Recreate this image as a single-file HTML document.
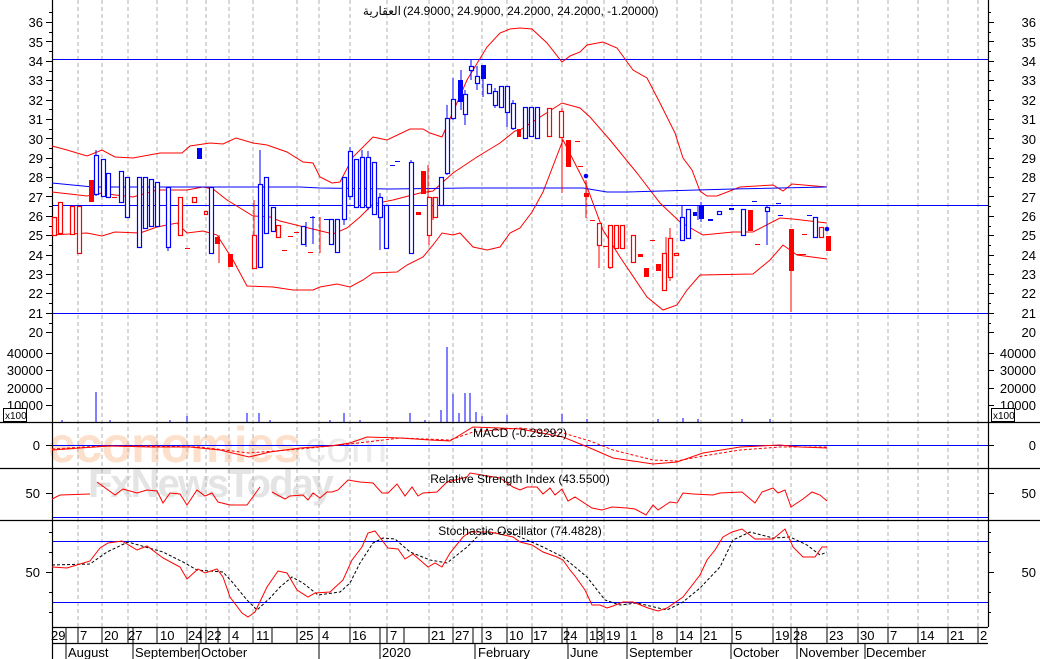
<!DOCTYPE html>
<html><head><meta charset="utf-8"><style>
html,body{margin:0;padding:0;background:#fff;width:1040px;height:659px;overflow:hidden}
svg{display:block;font-family:"Liberation Sans","Noto Sans CJK SC",sans-serif}
</style></head><body>
<svg width="1040" height="659" viewBox="0 0 1040 659" xmlns="http://www.w3.org/2000/svg">
<rect width="1040" height="659" fill="#fff"/>
<!-- watermark -->
<text x="48" y="462" font-size="50" fill="#fde0cc" font-weight="bold" letter-spacing="-1">economies</text>
<text x="292" y="462" font-size="44" fill="#ebebeb">.com</text>
<text x="88" y="497" font-size="40" fill="#e4e4e4" font-weight="bold" letter-spacing="-2">FxNewsToday</text>
<!-- vertical grid -->
<g stroke="#b0b0b0" stroke-dasharray="4,3" stroke-width="1">
<path d="M78 0V627M102 0V627M128 0V627M157 0V627M187 0V627M206 0V627M229 0V627M253 0V627M297 0V627M319 0V627M350 0V627M387 0V627M429 0V627M453 0V627M482 0V627M507 0V627M532 0V627M562 0V627M587 0V627M604 0V627M627 0V627M653 0V627M677 0V627M701 0V627M732 0V627M773 0V627M791 0V627M827 0V627M858 0V627M888 0V627M918 0V627M948 0V627M978 0V627"/>
</g>
<!-- horizontal blue lines -->
<g stroke="#0000ff" stroke-width="1">
<path d="M52 59.5H988M52 205.5H988M52 313.5H988M52 445.5H988M52 517.5H988M52 541.5H988M52 602.5H988"/>
</g>
<!-- panel separators -->
<g stroke="#000" stroke-width="1.2">
<path d="M0 422.5H1040M0 468.5H1040M0 520.5H1040M52 627.5H988M52 643.5H988"/>
<path d="M52.5 0V659M988.5 0V627"/>
</g>
<!-- axis ticks -->
<g stroke="#000" stroke-width="1">
<path d="M46 22.5H52M46 41.5H52M46 61.5H52M46 80.5H52M46 100.5H52M46 119.5H52M46 138.5H52M46 158.5H52M46 177.5H52M46 196.5H52M46 216.5H52M46 235.5H52M46 255.5H52M46 274.5H52M46 293.5H52M46 313.5H52M46 332.5H52"/>
<path d="M49 12.5H52M49 32.5H52M49 51.5H52M49 71.5H52M49 90.5H52M49 109.5H52M49 129.5H52M49 148.5H52M49 167.5H52M49 187.5H52M49 206.5H52M49 226.5H52M49 245.5H52M49 264.5H52M49 284.5H52M49 303.5H52M49 323.5H52"/>
<path d="M988 22.5H994M988 41.5H994M988 61.5H994M988 80.5H994M988 100.5H994M988 119.5H994M988 138.5H994M988 158.5H994M988 177.5H994M988 196.5H994M988 216.5H994M988 235.5H994M988 255.5H994M988 274.5H994M988 293.5H994M988 313.5H994M988 332.5H994"/>
<path d="M988 12.5H991M988 32.5H991M988 51.5H991M988 71.5H991M988 90.5H991M988 109.5H991M988 129.5H991M988 148.5H991M988 167.5H991M988 187.5H991M988 206.5H991M988 226.5H991M988 245.5H991M988 264.5H991M988 284.5H991M988 303.5H991M988 323.5H991"/>
<path d="M46 353.5H52M46 370.5H52M46 388.5H52M46 405.5H52M988 353.5H994M988 370.5H994M988 388.5H994M988 405.5H994"/>
<path d="M46 445.5H52M988 445.5H994M46 493.5H52M988 493.5H994M46 572.5H52M988 572.5H994"/>
<path d="M49 532.5H52M49 552.5H52M49 592.5H52M49 612.5H52M988 532.5H991M988 552.5H991M988 592.5H991M988 612.5H991"/>
</g>
<!-- axis labels -->
<g font-size="13" fill="#000" text-anchor="end">
<text x="43" y="27">36</text><text x="43" y="47">35</text><text x="43" y="66">34</text><text x="43" y="85">33</text><text x="43" y="105">32</text><text x="43" y="124">31</text><text x="43" y="144">30</text><text x="43" y="163">29</text><text x="43" y="182">28</text><text x="43" y="202">27</text><text x="43" y="221">26</text><text x="43" y="240">25</text><text x="43" y="260">24</text><text x="43" y="279">23</text><text x="43" y="298">22</text><text x="43" y="318">21</text><text x="43" y="337">20</text>
<text x="43" y="358">40000</text><text x="43" y="375">30000</text><text x="43" y="393">20000</text><text x="43" y="410">10000</text>
<text x="40" y="450">0</text><text x="40" y="498">50</text><text x="40" y="577">50</text>
<text x="1036" y="27">36</text><text x="1036" y="47">35</text><text x="1036" y="66">34</text><text x="1036" y="85">33</text><text x="1036" y="105">32</text><text x="1036" y="124">31</text><text x="1036" y="144">30</text><text x="1036" y="163">29</text><text x="1036" y="182">28</text><text x="1036" y="202">27</text><text x="1036" y="221">26</text><text x="1036" y="240">25</text><text x="1036" y="260">24</text><text x="1036" y="279">23</text><text x="1036" y="298">22</text><text x="1036" y="318">21</text><text x="1036" y="337">20</text>
<text x="1036" y="358">40000</text><text x="1036" y="375">30000</text><text x="1036" y="393">20000</text><text x="1036" y="410">10000</text>
<text x="1036" y="450">0</text><text x="1036" y="498">50</text><text x="1036" y="577">50</text>
</g>
<rect x="3.5" y="408.5" width="23" height="13" fill="#fff" stroke="#000"/>
<text x="5" y="419" font-size="10">x100</text>
<rect x="991.5" y="408.5" width="23" height="13" fill="#fff" stroke="#000"/>
<text x="993" y="419" font-size="10">x100</text>
<!-- title -->
<text x="401" y="15" font-size="12" text-anchor="end" fill="#000">العقارية</text>
<text x="403" y="15" font-size="12" fill="#000">(24.9000, 24.9000, 24.2000, 24.2000, -1.20000)</text>
<!-- bands -->
<g fill="none" stroke="#ff0000" stroke-width="1">
<polyline points="52,146 67,150 87,156 102,150 115,157 133,158 160,153 182,153 190,146 210,143 223,144 236,138 253,143 267,145 287,152 303,162 313,163 320,177 332,183 340,182 353,157 373,137 387,140 410,129 423,129 430,133 442,137 467,80 487,47 500,33 510,29 520,28 532,29 547,43 562,62 570,56 580,52 587,45 603,42 617,48 633,70 647,78 660,103 675,133 683,158 692,170 700,191 707,196 717,196 740,187 773,185 783,191 792,184 827,187"/>
<polyline points="52,192 87,196 102,193 115,195 133,197 157,190 187,190 203,187 213,189 227,200 253,216 270,217 280,221 300,226 317,230 333,234 347,228 360,217 373,204 393,200 420,193 433,191 453,173 477,157 500,143 515,131 520,130 562,103 580,108 590,117 610,140 637,173 660,203 680,222 703,235 733,232 753,232 780,218 793,219 827,223"/>
<polyline points="52,235 87,233 102,236 115,232 140,233 157,227 177,223 187,233 203,231 217,235 233,260 247,286 273,287 293,290 313,290 320,287 337,284 350,287 363,280 373,273 397,272 407,265 423,257 433,245 442,233 453,235 460,233 473,247 487,250 500,247 510,233 520,228 532,212 543,192 563,140 587,187 603,230 620,257 647,297 663,310 677,305 687,290 700,275 753,274 770,260 783,245 797,255 827,259"/>
</g>
<polyline fill="none" stroke="#0000ff" points="52,183 93,187 300,187 320,188 390,189 467,188 520,188 583,188 607,192 627,192 733,189 827,187"/>
<!-- candles: wicks -->
<g stroke="#0000ff" stroke-width="1">
<path d="M96 150V196M168 187V251M260 150V268M306 222V247M313 216V244M344 177V225M350 147V200M362 150V207M368 151V210M380 193V250M411 160V254M447 105V175M453 78V120M461 70V110M465 90V125M471 60V80M477 66V90M483 65V97M495 88V108M507 90V127M513 100V130M682 205V240M698 206V220M701 202V222M767 205V245"/>
</g>
<g stroke="#ff0000" stroke-width="1">
<path d="M219 235V263M254 200V268M320 217V253M428 165V205M429 197V245M562 108V193M586 180V218M599 223V268M610 225V269M666 237V287M670 228V281M791 229V312M433 197V220"/>
</g>
<!-- blue hollow -->
<g fill="#fff" stroke="#0000ff" stroke-width="1.2">
<rect x="94.5" y="155.5" width="4" height="39"/><rect x="101.5" y="159.5" width="4" height="37"/><rect x="106.5" y="173.5" width="4" height="24"/><rect x="119.5" y="171.5" width="4" height="31"/><rect x="125.5" y="177.5" width="4" height="40"/><rect x="137.5" y="177.5" width="4" height="70"/><rect x="143.5" y="177.5" width="4" height="51"/><rect x="149.5" y="179.5" width="4" height="47"/><rect x="155.5" y="182.5" width="4" height="44"/><rect x="166.5" y="187.5" width="4" height="60"/><rect x="209.5" y="187.5" width="4" height="66"/><rect x="258.5" y="184.5" width="4" height="83"/><rect x="264.5" y="177.5" width="4" height="56"/><rect x="271.5" y="207.5" width="4" height="24"/><rect x="301.5" y="226.5" width="4" height="18"/><rect x="329.5" y="219.5" width="4" height="25"/><rect x="335.5" y="219.5" width="4" height="33"/><rect x="342.5" y="177.5" width="4" height="42"/><rect x="348.5" y="151.5" width="4" height="45"/><rect x="354.5" y="159.5" width="4" height="48"/><rect x="360.5" y="157.5" width="4" height="50"/><rect x="366.5" y="157.5" width="4" height="50"/><rect x="372.5" y="162.5" width="4" height="52"/><rect x="378.5" y="197.5" width="4" height="20"/><rect x="384.5" y="205.5" width="4" height="43"/><rect x="409.5" y="162.5" width="4" height="91"/><rect x="439.5" y="177.5" width="4" height="28"/><rect x="445.5" y="118.5" width="4" height="55"/><rect x="451.5" y="99.5" width="4" height="19"/><rect x="463.5" y="94.5" width="4" height="20"/><rect x="469.5" y="66.5" width="4" height="4"/><rect x="475.5" y="76.5" width="4" height="7"/><rect x="487.5" y="84.5" width="4" height="9"/><rect x="493.5" y="91.5" width="4" height="14"/><rect x="499.5" y="86.5" width="4" height="21"/><rect x="505.5" y="86.5" width="4" height="26"/><rect x="511.5" y="103.5" width="4" height="25"/><rect x="523.5" y="107.5" width="4" height="31"/><rect x="529.5" y="107.5" width="4" height="29"/><rect x="535.5" y="107.5" width="4" height="31"/><rect x="680.5" y="217.5" width="4" height="23"/><rect x="686.5" y="209.5" width="4" height="29"/><rect x="717.5" y="211.5" width="4" height="3"/><rect x="741.5" y="209.5" width="4" height="26"/><rect x="765.5" y="207.5" width="4" height="4"/><rect x="813.5" y="217.5" width="4" height="20"/>
</g>
<g fill="#0000ff">
<rect x="197" y="148" width="5" height="11"/><rect x="458" y="80" width="5" height="22"/><rect x="481" y="65" width="5" height="14"/><rect x="693" y="212" width="4" height="4"/><rect x="699" y="206" width="5" height="13"/><rect x="708" y="219" width="5" height="2"/><rect x="729" y="208" width="5" height="2"/><rect x="752" y="201" width="5" height="1"/><rect x="776" y="203" width="5" height="1"/><rect x="395" y="161" width="5" height="1"/><rect x="390" y="165" width="5" height="1"/><rect x="324" y="219" width="5" height="1"/><rect x="310" y="217" width="5" height="1"/><rect x="778" y="215" width="5" height="1"/><rect x="807" y="215" width="5" height="1"/>
<circle cx="586" cy="176" r="2.3"/><circle cx="827" cy="229" r="2.3"/>
</g>
<g fill="#fff" stroke="#ff0000" stroke-width="1.2">
<rect x="52.5" y="217.5" width="4" height="18"/><rect x="58.5" y="202.5" width="4" height="31"/><rect x="70.5" y="206.5" width="4" height="28"/><rect x="77.5" y="206.5" width="4" height="47"/><rect x="178.5" y="197.5" width="4" height="38"/><rect x="192.5" y="197.5" width="4" height="5"/><rect x="204.5" y="211.5" width="3" height="3"/><rect x="252.5" y="235.5" width="4" height="33"/><rect x="276.5" y="225.5" width="4" height="12"/><rect x="427.5" y="197.5" width="4" height="38"/><rect x="433.5" y="197.5" width="4" height="20"/><rect x="547.5" y="108.5" width="4" height="28"/><rect x="559.5" y="111.5" width="4" height="26"/><rect x="597.5" y="223.5" width="4" height="22"/><rect x="608.5" y="225.5" width="4" height="42"/><rect x="614.5" y="225.5" width="4" height="23"/><rect x="620.5" y="225.5" width="4" height="23"/><rect x="631.5" y="235.5" width="4" height="27"/><rect x="662.5" y="253.5" width="4" height="37"/><rect x="668.5" y="238.5" width="4" height="39"/><rect x="674.5" y="253.5" width="4" height="2"/><rect x="819.5" y="227.5" width="4" height="10"/>
</g>
<g fill="#ff0000">
<rect x="89" y="180" width="5" height="22"/><rect x="215" y="237" width="5" height="7"/><rect x="228" y="254" width="5" height="13"/><rect x="416" y="212" width="5" height="3"/><rect x="421" y="171" width="5" height="23"/><rect x="517" y="129" width="4" height="8"/><rect x="566" y="140" width="5" height="27"/><rect x="584" y="193" width="5" height="4"/><rect x="638" y="254" width="5" height="3"/><rect x="644" y="268" width="5" height="9"/><rect x="656" y="264" width="5" height="7"/><rect x="748" y="210" width="5" height="21"/><rect x="789" y="229" width="5" height="42"/><rect x="826" y="236" width="5" height="15"/>
<rect x="112" y="197" width="5" height="1"/><rect x="185" y="248" width="5" height="1"/><rect x="282" y="250" width="5" height="1"/><rect x="288" y="236" width="5" height="1"/><rect x="294" y="232" width="5" height="1"/><rect x="308" y="252" width="5" height="1"/><rect x="575" y="141" width="5" height="1"/><rect x="578" y="166" width="5" height="1"/><rect x="590" y="220" width="5" height="1"/><rect x="603" y="246" width="5" height="1"/><rect x="650" y="240" width="5" height="1"/><rect x="755" y="244" width="5" height="1"/><rect x="797" y="254" width="5" height="1"/><rect x="801" y="254" width="5" height="1"/><rect x="802" y="234" width="5" height="1"/>
</g>
<!-- volume -->
<g stroke="#0000ff" stroke-width="1">
<path d="M96 392V422M187 416V422M247 413V422M259 413V422M344 413V422M410 413V422M441 410V422M447 347V422M453 394V422M459 413V422M465 393V422M470 393V422M476 412V422M482 416V422M507 415V422M562 414V422M587 419V422M658 419V422M683 418V422M62 420V422M110 420V422M170 420V422M270 420V422M330 420V422M360 420V422M425 420V422M698 419V422M742 419V422M770 419V422"/>
</g>
<!-- MACD -->
<polyline fill="none" stroke="#ff0000" points="52,450 80,448 110,446 150,447 190,447 220,450 249,457 270,452 300,448 330,446 350,443 367,437 400,438 430,440 450,441 473,427 500,428 520,429 563,437 590,448 613,458 653,464 677,462 703,453 740,447 780,445 800,447 827,448"/>
<polyline fill="none" stroke="#ff0000" stroke-dasharray="3,2" points="52,449 100,446 150,446 200,447 249,453 300,449 350,444 400,438 450,440 473,432 520,428 563,433 590,441 613,450 653,460 677,461 703,456 740,450 780,447 827,447"/>
<text x="520" y="437" font-size="12" text-anchor="middle">MACD (-0.29292)</text>
<!-- RSI -->
<polyline fill="none" stroke="#ff0000" points="52,499 60,495 90,494"/>
<polyline fill="none" stroke="#ff0000" points="97,482 115,495 123,489 137,493 147,490 157,491 163,503 170,493 180,494 187,505 197,490 205,496 212,493 218,502 230,505 247,505 260,487"/>
<polyline fill="none" stroke="#ff0000" points="272,492 285,499 290,496 303,495 308,500 313,493 320,498 327,492 332,492 338,490 348,480 360,482 373,483 382,493 388,493 397,484 405,496 412,487 418,496 423,493 437,492 447,482 467,477 470,473 500,478 513,487 520,490 527,487 537,487 543,494 550,488 555,495 562,489 568,501 575,497 592,508 602,510 612,507 627,508 635,509 646,515 653,505 658,510 670,502 677,503 683,493 693,494 713,495 720,493 742,492 755,503 762,492 773,488 778,493 785,490 791,507 803,499 812,492 820,495 827,501"/>
<text x="520" y="483" font-size="12" text-anchor="middle">Relative Strength Index (43.5500)</text>
<!-- Stoch -->
<polyline fill="none" stroke="#000" stroke-dasharray="3,2" points="52,565 90,564 107,552 128,542 163,552 183,562 197,570 223,572 233,583 247,600 257,610 270,598 280,587 292,577 303,583 318,595 340,592 350,583 360,563 373,543 383,538 395,539 410,552 430,560 447,563 467,547 480,534 507,532 520,537 543,547 563,557 587,577 605,600 620,605 637,603 667,610 683,602 700,588 720,567 733,540 750,532 773,538 790,537 807,545 820,555 827,552"/>
<polyline fill="none" stroke="#ff0000" points="52,567 67,568 90,561 100,548 108,543 122,541 137,550 147,546 163,558 180,567 187,579 198,569 205,573 217,569 223,577 230,597 242,613 248,617 255,612 267,587 278,571 287,573 297,590 308,597 315,593 330,592 343,580 352,560 362,547 368,533 375,531 388,548 398,549 405,559 413,554 428,567 435,563 442,567 450,553 463,537 470,532 490,532 513,537 520,542 532,545 543,552 557,557 563,560 570,570 575,576 585,590 592,605 600,605 607,608 613,606 623,602 633,602 648,608 658,611 667,608 683,597 700,575 707,560 715,550 723,537 732,532 742,529 755,539 773,539 785,529 793,547 803,557 815,557 822,547 827,547"/>
<text x="520" y="535" font-size="12" text-anchor="middle">Stochastic Oscillator (74.4828)</text>
<!-- date ticks -->
<g stroke="#000" stroke-width="1">
<path d="M66 627V643M78 627V643M102 627V643M128 627V643M133 627V643M157 627V643M187 627V643M201 627V643M206 627V643M218 627V643M229 627V643M253 627V643M272 627V643M297 627V643M319 627V643M350 627V643M380 627V643M387 627V643M404 627V643M429 627V643M453 627V643M473 627V643M482 627V643M507 627V643M532 627V643M562 627V643M567 627V643M587 627V643M597 627V643M604 627V643M627 627V643M653 627V643M677 627V643M701 627V643M732 627V643M773 627V643M791 627V643M797 627V643M827 627V643M858 627V643M888 627V643M918 627V643M948 627V643M978 627V643"/>
<path d="M66 643V659M133 643V659M199 643V659M319 643V659M380 643V659M475 643V659M568 643V659M627 643V659M731 643V659M797 643V659M865 643V659"/>
</g>
<g font-size="13" fill="#000">
<text x="51" y="640">29</text><text x="80" y="640">7</text><text x="104" y="640">20</text><text x="128" y="640">27</text><text x="160" y="640">10</text><text x="188" y="640">24</text><text x="207" y="640">22</text><text x="232" y="640">4</text><text x="256" y="640">11</text><text x="299" y="640">25</text><text x="322" y="640">4</text><text x="352" y="640">16</text><text x="390" y="640">7</text><text x="431" y="640">21</text><text x="455" y="640">27</text><text x="485" y="640">3</text><text x="509" y="640">10</text><text x="533" y="640">17</text><text x="563" y="640">24</text><text x="589" y="640">13</text><text x="606" y="640">19</text><text x="630" y="640">1</text><text x="656" y="640">8</text><text x="679" y="640">14</text><text x="703" y="640">21</text><text x="735" y="640">5</text><text x="775" y="640">19</text><text x="793" y="640">28</text><text x="829" y="640">23</text><text x="860" y="640">30</text><text x="890" y="640">7</text><text x="920" y="640">14</text><text x="950" y="640">21</text><text x="980" y="640">2</text>
<text x="68" y="657">August</text><text x="135" y="657">September</text><text x="201" y="657">October</text><text x="382" y="657">2020</text><text x="478" y="657">February</text><text x="570" y="657">June</text><text x="629" y="657">September</text><text x="733" y="657">October</text><text x="799" y="657">November</text><text x="866" y="657">December</text>
</g>
</svg>
</body></html>
